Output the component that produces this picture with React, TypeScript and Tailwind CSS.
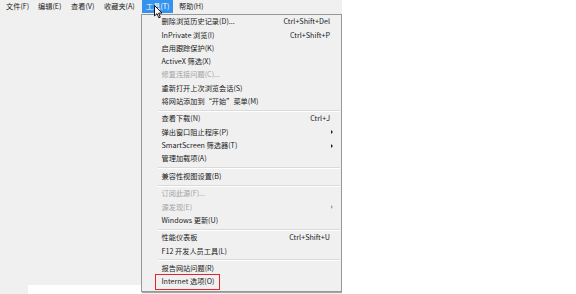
import React from 'react';

type Item =
  | { kind: 'sep' }
  | { kind: 'item'; label: string; shortcut?: string; sub?: boolean; disabled?: boolean; boxed?: boolean };

const items: Item[] = [
  { kind: 'item', label: '删除浏览历史记录(D)...', shortcut: 'Ctrl+Shift+Del' },
  { kind: 'item', label: 'InPrivate 浏览(I)', shortcut: 'Ctrl+Shift+P' },
  { kind: 'item', label: '启用跟踪保护(K)' },
  { kind: 'item', label: 'ActiveX 筛选(X)' },
  { kind: 'item', label: '修复连接问题(C)...', disabled: true },
  { kind: 'item', label: '重新打开上次浏览会话(S)' },
  { kind: 'item', label: '将网站添加到“开始”菜单(M)' },
  { kind: 'sep' },
  { kind: 'item', label: '查看下载(N)', shortcut: 'Ctrl+J' },
  { kind: 'item', label: '弹出窗口阻止程序(P)', sub: true },
  { kind: 'item', label: 'SmartScreen 筛选器(T)', sub: true },
  { kind: 'item', label: '管理加载项(A)' },
  { kind: 'sep' },
  { kind: 'item', label: '兼容性视图设置(B)' },
  { kind: 'sep' },
  { kind: 'item', label: '订阅此源(F)...', disabled: true },
  { kind: 'item', label: '源发现(E)', disabled: true, sub: true },
  { kind: 'item', label: 'Windows 更新(U)' },
  { kind: 'sep' },
  { kind: 'item', label: '性能仪表板', shortcut: 'Ctrl+Shift+U' },
  { kind: 'item', label: 'F12 开发人员工具(L)' },
  { kind: 'sep' },
  { kind: 'item', label: '报告网站问题(R)' },
  { kind: 'item', label: 'Internet 选项(O)', boxed: true },
];

const menus = ['文件(F)', '编辑(E)', '查看(V)', '收藏夹(A)'];

export default function App() {
  return (
    <div
      className="w-[576px] h-[294px] overflow-hidden bg-white flex flex-col relative text-[#1b1b1b]"
      style={{ fontFamily: '"Noto Sans CJK SC", "Noto Sans", sans-serif' }}
    >
      {/* Menu bar */}
      <div className="w-[342px] h-[14px] bg-[#f0f0f0] flex items-start text-[7.2px] leading-[13px] shrink-0">
        {menus.map((m, i) => (
          <span
            key={m}
            className={
              i === 0 ? 'ml-[6px] w-[32px]' : i === 1 ? 'w-[33px]' : i === 2 ? 'w-[33px]' : 'w-[38px]'
            }
          >
            {m}
          </span>
        ))}
        <span className="h-[13px] w-[31px] bg-[#3592ed] text-white pl-[4px]">工具(T)</span>
        <span className="ml-[6px]">帮助(H)</span>
      </div>

      <div className="flex flex-1 min-h-0">
        {/* Left page area */}
        <div className="w-[141px] flex flex-col">
          <div className="flex-1 bg-[#f0f0f0]" />
          <div className="h-[9px] flex">
            <div className="w-[28px] bg-[#f0f0f0]" />
            <div className="flex-1 bg-white" />
          </div>
        </div>

        {/* Dropdown */}
        <div className="w-[201px] h-[278px] bg-[#f0f0f0] border border-[#979797] shadow-[1px_1px_1px_rgba(0,0,0,0.35)] pt-[0.4px] text-[7.2px]">
          {items.map((it, i) =>
            it.kind === 'sep' ? (
              <div key={i} className="h-[4.3px] flex items-center pl-[16px] pr-[1px]">
                <div className="flex-1 h-px bg-[#dadada] shadow-[0_1px_0_#ffffff]" />
              </div>
            ) : (
              <div
                key={i}
                className={`h-[13.25px] flex items-center pl-[19.5px] pr-[11px] ${
                  it.disabled ? 'text-[#a3a3a3]' : ''
                }`}
              >
                <span className="relative whitespace-nowrap leading-none">
                  {it.label}
                  {it.boxed && (
                    <span className="absolute -left-[6.5px] -right-[5px] -top-[4px] -bottom-[4.5px] border-[1.5px] border-[#e0262a]" />
                  )}
                </span>
                <span className="ml-auto whitespace-nowrap leading-none">{it.shortcut}</span>
                {it.sub && (
                  <span
                    className={`ml-auto mr-[-3px] w-0 h-0 border-y-[2px] border-y-transparent border-l-[2.5px] ${
                      it.disabled ? 'border-l-[#a3a3a3]' : 'border-l-[#222]'
                    }`}
                  />
                )}
              </div>
            )
          )}
        </div>

        <div className="flex-1 bg-white" />
      </div>

      {/* Mouse cursor */}
      <svg className="absolute left-[154px] top-[5px]" width="9" height="14" viewBox="0 0 9 14">
        <path d="M0.5 0.5 L0.5 11 L3 8.6 L4.8 12.8 L6.3 12.2 L4.6 8.1 L8 8.1 Z" fill="#fff" stroke="#000" strokeWidth="0.9" strokeLinejoin="round" />
      </svg>
    </div>
  );
}
